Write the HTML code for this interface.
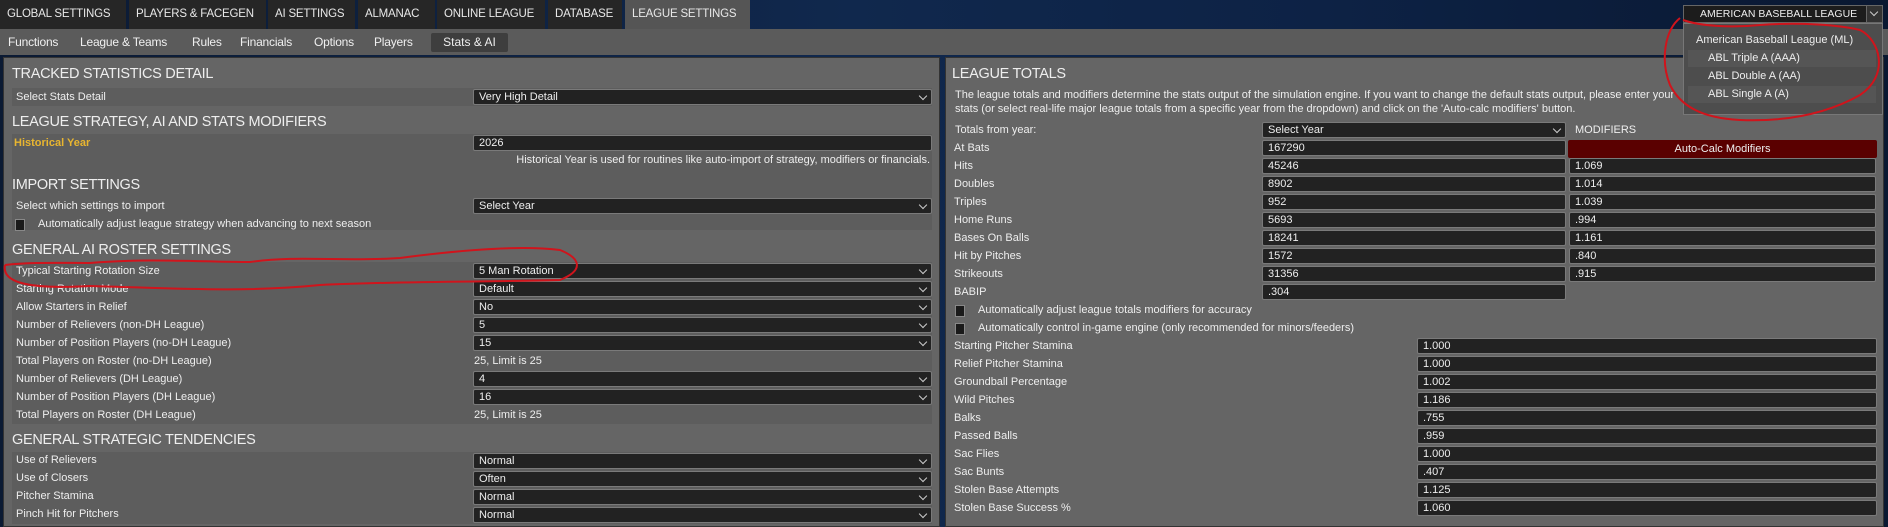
<!DOCTYPE html>
<html><head><meta charset="utf-8"><style>
*{margin:0;padding:0;box-sizing:border-box}
body{width:1888px;height:517px;overflow:hidden;position:relative;font-family:"Liberation Sans",sans-serif;font-size:11px;color:#eee;background:linear-gradient(90deg,#0b1a33 0%,#10284d 45%,#0d2245 70%,#0a1831 100%)}
.a{position:absolute}
.tab{position:absolute;top:0;height:29px;background:#262626;color:#e8e8e8;font-size:11.5px;line-height:29px;padding-left:7px;white-space:nowrap;letter-spacing:-0.2px}
.sub{position:absolute;top:29px;left:0;width:1888px;height:26px;background:#5b5b5b}
.si{position:absolute;top:29px;line-height:26px;font-size:12px;color:#f0f0f0;letter-spacing:-0.2px}
.panel{position:absolute;top:57px;height:470px;background:#656565;border:1px solid #333}
.h{position:absolute;font-size:14.5px;color:#eee;line-height:18px;letter-spacing:-0.3px}
.row{position:absolute;height:18px;background:#5d5d5d;left:12px;width:920px}
.lbl{position:absolute;line-height:18px;white-space:nowrap}
.box{position:absolute;height:16px;background:#222;border:1px solid #7a7a7a;border-radius:2px;line-height:14px;padding-left:5px;white-space:nowrap}
.dd:after{content:"";position:absolute;right:5px;top:3px;width:5px;height:5px;border-right:1.3px solid #ccc;border-bottom:1.3px solid #ccc;transform:rotate(45deg)}
.cb{position:absolute;width:10px;height:12px;background:#1a1a1a;border:1px solid #888}
</style></head><body>
<div class="tab" style="left:0;width:126px">GLOBAL SETTINGS</div>
<div class="tab" style="left:129px;width:137px">PLAYERS &amp; FACEGEN</div>
<div class="tab" style="left:268px;width:87px">AI SETTINGS</div>
<div class="tab" style="left:358px;width:77px">ALMANAC</div>
<div class="tab" style="left:437px;width:108px">ONLINE LEAGUE</div>
<div class="tab" style="left:548px;width:74px">DATABASE</div>
<div class="tab" style="left:625px;width:125px;background:#555">LEAGUE SETTINGS</div>
<div class="sub"></div>
<div class="si" style="left:8px">Functions</div>
<div class="si" style="left:80px">League &amp; Teams</div>
<div class="si" style="left:192px">Rules</div>
<div class="si" style="left:240px">Financials</div>
<div class="si" style="left:314px">Options</div>
<div class="si" style="left:374px">Players</div>
<div class="a" style="left:431px;top:33px;width:77px;height:19px;background:#3e3e3e;border-radius:2px;line-height:19px;font-size:12px;text-align:center">Stats &amp; AI</div>

<div class="panel" style="left:3px;width:937px"></div>
<div class="panel" style="left:945px;width:939px"></div>

<!-- LEFT -->
<div class="h" style="left:12px;top:65px">TRACKED STATISTICS DETAIL</div>
<div class="row" style="top:88px"></div><div class="lbl" style="left:16px;top:88px">Select Stats Detail</div><div class="box dd" style="left:473px;top:89px;width:459px">Very High Detail</div>
<div class="h" style="left:12px;top:113px">LEAGUE STRATEGY, AI AND STATS MODIFIERS</div>
<div class="row" style="top:134px"></div><div class="lbl" style="left:14px;top:134px;color:#e8b530;font-weight:bold">Historical Year</div><div class="box" style="left:473px;top:135px;width:459px">2026</div>
<div class="row" style="top:152px"></div><div class="lbl" style="right:958px;top:151px">Historical Year is used for routines like auto-import of strategy, modifiers or financials.</div>
<div class="row" style="top:170px;height:60px"></div>
<div class="h" style="left:12px;top:176px">IMPORT SETTINGS</div>
<div class="lbl" style="left:16px;top:197px">Select which settings to import</div><div class="box dd" style="left:473px;top:198px;width:459px">Select Year</div>
<div class="cb" style="left:15px;top:219px"></div><div class="lbl" style="left:38px;top:215px">Automatically adjust league strategy when advancing to next season</div>
<div class="h" style="left:12px;top:241px">GENERAL AI ROSTER SETTINGS</div>
<div class="row" style="top:262px"></div><div class="lbl" style="left:16px;top:262px">Typical Starting Rotation Size</div><div class="box dd" style="left:473px;top:263px;width:459px">5 Man Rotation</div>
<div class="row" style="top:280px"></div><div class="lbl" style="left:16px;top:280px">Starting Rotation Mode</div><div class="box dd" style="left:473px;top:281px;width:459px">Default</div>
<div class="row" style="top:298px"></div><div class="lbl" style="left:16px;top:298px">Allow Starters in Relief</div><div class="box dd" style="left:473px;top:299px;width:459px">No</div>
<div class="row" style="top:316px"></div><div class="lbl" style="left:16px;top:316px">Number of Relievers (non-DH League)</div><div class="box dd" style="left:473px;top:317px;width:459px">5</div>
<div class="row" style="top:334px"></div><div class="lbl" style="left:16px;top:334px">Number of Position Players (no-DH League)</div><div class="box dd" style="left:473px;top:335px;width:459px">15</div>
<div class="row" style="top:352px"></div><div class="lbl" style="left:16px;top:352px">Total Players on Roster (no-DH League)</div><div class="lbl" style="left:474px;top:352px">25, Limit is 25</div>
<div class="row" style="top:370px"></div><div class="lbl" style="left:16px;top:370px">Number of Relievers (DH League)</div><div class="box dd" style="left:473px;top:371px;width:459px">4</div>
<div class="row" style="top:388px"></div><div class="lbl" style="left:16px;top:388px">Number of Position Players (DH League)</div><div class="box dd" style="left:473px;top:389px;width:459px">16</div>
<div class="row" style="top:406px"></div><div class="lbl" style="left:16px;top:406px">Total Players on Roster (DH League)</div><div class="lbl" style="left:474px;top:406px">25, Limit is 25</div>
<div class="h" style="left:12px;top:431px">GENERAL STRATEGIC TENDENCIES</div>
<div class="row" style="top:452px"></div><div class="lbl" style="left:16px;top:451px">Use of Relievers</div><div class="box dd" style="left:473px;top:453px;width:459px">Normal</div>
<div class="row" style="top:470px"></div><div class="lbl" style="left:16px;top:469px">Use of Closers</div><div class="box dd" style="left:473px;top:471px;width:459px">Often</div>
<div class="row" style="top:488px"></div><div class="lbl" style="left:16px;top:487px">Pitcher Stamina</div><div class="box dd" style="left:473px;top:489px;width:459px">Normal</div>
<div class="row" style="top:506px"></div><div class="lbl" style="left:16px;top:505px">Pinch Hit for Pitchers</div><div class="box dd" style="left:473px;top:507px;width:459px">Normal</div>

<!-- RIGHT -->
<div class="h" style="left:952px;top:65px">LEAGUE TOTALS</div>
<div class="lbl" style="left:955px;top:88px;line-height:14px;white-space:normal;width:720px">The league totals and modifiers determine the stats output of the simulation engine. If you want to change the default stats output, please enter your stats (or select real-life major league totals from a specific year from the dropdown) and click on the 'Auto-calc modifiers' button.</div>
<div class="lbl" style="left:955px;top:121px">Totals from year:</div><div class="box dd" style="left:1262px;top:122px;width:304px">Select Year</div><div class="lbl" style="left:1575px;top:121px">MODIFIERS</div>
<div class="lbl" style="left:954px;top:139px">At Bats</div><div class="box" style="left:1262px;top:140px;width:304px">167290</div>
<div class="a" style="left:1568px;top:140px;width:309px;height:18px;background:#5a0000;border-radius:2px;text-align:center;line-height:18px">Auto-Calc Modifiers</div>
<div class="lbl" style="left:954px;top:157px">Hits</div><div class="box" style="left:1262px;top:158px;width:304px">45246</div><div class="box" style="left:1569px;top:158px;width:307px">1.069</div>
<div class="lbl" style="left:954px;top:175px">Doubles</div><div class="box" style="left:1262px;top:176px;width:304px">8902</div><div class="box" style="left:1569px;top:176px;width:307px">1.014</div>
<div class="lbl" style="left:954px;top:193px">Triples</div><div class="box" style="left:1262px;top:194px;width:304px">952</div><div class="box" style="left:1569px;top:194px;width:307px">1.039</div>
<div class="lbl" style="left:954px;top:211px">Home Runs</div><div class="box" style="left:1262px;top:212px;width:304px">5693</div><div class="box" style="left:1569px;top:212px;width:307px">.994</div>
<div class="lbl" style="left:954px;top:229px">Bases On Balls</div><div class="box" style="left:1262px;top:230px;width:304px">18241</div><div class="box" style="left:1569px;top:230px;width:307px">1.161</div>
<div class="lbl" style="left:954px;top:247px">Hit by Pitches</div><div class="box" style="left:1262px;top:248px;width:304px">1572</div><div class="box" style="left:1569px;top:248px;width:307px">.840</div>
<div class="lbl" style="left:954px;top:265px">Strikeouts</div><div class="box" style="left:1262px;top:266px;width:304px">31356</div><div class="box" style="left:1569px;top:266px;width:307px">.915</div>
<div class="lbl" style="left:954px;top:283px">BABIP</div><div class="box" style="left:1262px;top:284px;width:304px">.304</div>
<div class="cb" style="left:955px;top:305px"></div><div class="lbl" style="left:978px;top:301px">Automatically adjust league totals modifiers for accuracy</div>
<div class="cb" style="left:955px;top:323px"></div><div class="lbl" style="left:978px;top:319px">Automatically control in-game engine (only recommended for minors/feeders)</div>
<div class="lbl" style="left:954px;top:337px">Starting Pitcher Stamina</div><div class="box" style="left:1417px;top:338px;width:460px">1.000</div>
<div class="lbl" style="left:954px;top:355px">Relief Pitcher Stamina</div><div class="box" style="left:1417px;top:356px;width:460px">1.000</div>
<div class="lbl" style="left:954px;top:373px">Groundball Percentage</div><div class="box" style="left:1417px;top:374px;width:460px">1.002</div>
<div class="lbl" style="left:954px;top:391px">Wild Pitches</div><div class="box" style="left:1417px;top:392px;width:460px">1.186</div>
<div class="lbl" style="left:954px;top:409px">Balks</div><div class="box" style="left:1417px;top:410px;width:460px">.755</div>
<div class="lbl" style="left:954px;top:427px">Passed Balls</div><div class="box" style="left:1417px;top:428px;width:460px">.959</div>
<div class="lbl" style="left:954px;top:445px">Sac Flies</div><div class="box" style="left:1417px;top:446px;width:460px">1.000</div>
<div class="lbl" style="left:954px;top:463px">Sac Bunts</div><div class="box" style="left:1417px;top:464px;width:460px">.407</div>
<div class="lbl" style="left:954px;top:481px">Stolen Base Attempts</div><div class="box" style="left:1417px;top:482px;width:460px">1.125</div>
<div class="lbl" style="left:954px;top:499px">Stolen Base Success %</div><div class="box" style="left:1417px;top:500px;width:460px">1.060</div>

<!-- league dropdown -->
<div class="a" style="left:1683px;top:5px;width:200px;height:18px;background:#1c1c1c;border:1px solid #666;line-height:16px;padding-left:16px;font-size:10.5px;white-space:nowrap;overflow:hidden">AMERICAN BASEBALL LEAGUE</div>
<div class="a" style="left:1866px;top:5px;width:17px;height:18px;background:#333;border:1px solid #666"></div>
<div class="a" style="left:1871px;top:9px;width:6px;height:6px;border-right:1.3px solid #ccc;border-bottom:1.3px solid #ccc;transform:rotate(45deg)"></div>
<div class="a" style="left:1683px;top:23px;width:200px;height:92px;background:#4d4d4d;border:1px solid #777"></div>
<div class="a" style="left:1688px;top:50px;width:188px;height:17px;background:#555"></div>
<div class="a" style="left:1688px;top:86px;width:188px;height:17px;background:#555"></div>
<div class="lbl" style="left:1696px;top:31px">American Baseball League (ML)</div>
<div class="lbl" style="left:1708px;top:49px">ABL Triple A (AAA)</div>
<div class="lbl" style="left:1708px;top:67px">ABL Double A (AA)</div>
<div class="lbl" style="left:1708px;top:85px">ABL Single A (A)</div>

<svg class="a" style="left:0;top:0" width="1888" height="517">
<g fill="none" stroke="#d0141c" stroke-width="2">
<path d="M1680 18 C1665 30 1660 60 1670 85 C1680 105 1700 118 1740 120 C1790 122 1830 112 1860 95 C1890 75 1880 40 1860 30 C1840 25 1800 22 1760 25 C1730 28 1700 26 1683 20"/>
<path d="M5 265 C2 280 20 290 90 286 C170 288 240 293 320 285 C400 281 500 282 560 280 C585 270 580 258 560 250 C520 245 460 250 400 258 C340 262 300 255 250 262 C200 262 150 258 90 263 C60 263 30 262 5 265"/>
</g></svg>
</body></html>
